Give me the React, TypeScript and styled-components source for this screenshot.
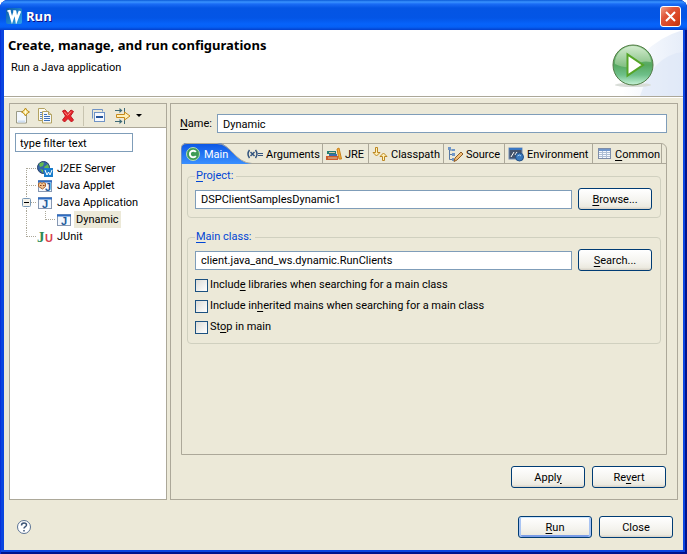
import React, { useState } from "react";
import styled, { createGlobalStyle, css } from "styled-components";

const face = "#ece9d8";
const line = "#aca899";
const fieldBorder = "#7f9db9";
const navy = "#003c74";

const GlobalStyle = createGlobalStyle`
  * { box-sizing: border-box; }
  body {
    margin: 0;
    background: #fff;
    color: #000;
    font-family: Roboto, "Noto Sans", sans-serif;
    font-size: 11px;
    line-height: 16px;
  }
  button, input { font: inherit; color: inherit; }
  u { text-underline-offset: 2px; text-decoration-thickness: 1px; }
`;

const Window = styled.div`
  display: flex;
  flex-direction: column;
  min-height: 100vh;
  padding: 0 4px 4px;
  border-radius: 8px 8px 0 0;
  overflow: hidden;
  background: #0a45e0;
  box-shadow: inset 1px 0 #0831d9, inset -2px 0 #00138c, inset 0 -2px #00138c;
`;

const TitleBar = styled.header`
  display: flex;
  align-items: center;
  gap: 4px;
  height: 30px;
  margin: 0 -4px;
  padding: 2px 6px 0;
  background: linear-gradient(#0a5ad8 0, #3a93ff 2px, #1a6cf5 4px, #0455e4 8px, #0355e6 18px, #0663fb 24px, #0560f6 27px, #0340cc 30px);
`;

const TitleText = styled.h1`
  flex: 1;
  margin: 0;
  color: #fff;
  font-family: "Open Sans", "Noto Sans", sans-serif;
  font-size: 13px;
  font-weight: 700;
  line-height: 18px;
  text-shadow: 1px 1px #0f1089;
`;

const CloseBox = styled.button`
  display: flex;
  width: 21px;
  height: 21px;
  padding: 0;
  align-items: center;
  justify-content: center;
  border: 1px solid #fff;
  border-radius: 3px;
  background: linear-gradient(135deg, #f0a088, #e0563a 35%, #d8401c 75%, #b83410);
`;

const Banner = styled.section`
  position: relative;
  display: flex;
  justify-content: space-between;
  height: 68px;
  padding: 7px 28px 0 4px;
  border-bottom: 1px solid #fff;
  background: #fff;
  box-shadow: inset 0 -1px ${line};
`;

const BannerArt = styled.svg`
  position: absolute;
  right: 0;
  top: 0;
`;

const BannerText = styled.div`
  h2 { margin: 0; font-family: "Noto Sans", sans-serif; font-size: 13px; line-height: 17px; font-weight: 700; }
  p { margin: 6px 0 0 3px; }
`;

const RunArt = styled.svg`
  position: relative;
  margin-top: 5px;
`;

const Body = styled.main`
  display: grid;
  flex: 1;
  grid-template-columns: 158px minmax(0, 1fr);
  grid-template-rows: 1fr auto;
  column-gap: 3px;
  padding: 5px 5px 0;
  background: ${face};
`;

const Sidebar = styled.aside`
  display: flex;
  flex-direction: column;
  border: 1px solid ${line};
  background: #fff;
`;

const Toolbar = styled.div`
  display: flex;
  align-items: center;
  gap: 7px;
  height: 24px;
  padding: 0 4px;
  border-bottom: 1px solid ${line};
  background: ${face};
`;

const ToolButton = styled.button`
  display: flex;
  height: 16px;
  padding: 0;
  align-items: center;
  gap: 5px;
  border: 0;
  background: none;
`;

const ToolDivider = styled.span`
  width: 1px;
  height: 20px;
  background: #c8c4b0;
`;

const TextField = styled.input`
  min-width: 0;
  height: 19px;
  padding: 1px 5px 0;
  border: 1px solid ${fieldBorder};
  background: #fff;
  outline: 0;
`;

const FilterField = styled(TextField)`
  width: 118px;
  margin: 5px 5px 8px;
  padding: 1px 4px 0;
`;

const Tree = styled.ul`
  margin: 0;
  padding: 0 0 0 10px;
  list-style: none;
`;

const TreeRow = styled.li`
  display: flex;
  align-items: center;
  height: 17px;
`;

const TreeLabel = styled.button<{ $selected?: boolean }>`
  height: 17px;
  margin-left: 2px;
  padding: 1px 2px 0;
  border: 0;
  white-space: nowrap;
  background: ${(p) => (p.$selected ? face : "none")};
`;

const Editor = styled.section`
  display: flex;
  flex-direction: column;
  padding: 10px 10px 11px 9px;
  border: 1px solid ${line};
`;

const NameRow = styled.label`
  display: flex;
  align-items: center;
  gap: 5px;
  margin-bottom: 10px;
  ${TextField} { flex: 1; }
`;

const TabFolder = styled.div`
  display: flex;
  flex: 1;
  flex-direction: column;
  margin-left: 1px;
  border: 1px solid ${line};
  border-radius: 5px 6px 0 0;
`;

const TabStrip = styled.div`
  display: grid;
  grid-template-columns: 61px 80px 46px 75px 61px 88px 69px 1fr;
  height: 20px;
  border-bottom: 1px solid ${line};
`;

const Tab = styled.button<{ $active?: boolean; $divided?: boolean }>`
  position: relative;
  display: flex;
  align-items: center;
  gap: 3px;
  padding: 2px 0 0 3px;
  border: 0;
  border-right: ${(p) => (p.$divided ? `1px solid ${line}` : "0")};
  background: none;
  white-space: nowrap;
  svg { flex: none; }
  ${(p) => p.$active && css`color: #fff;`}
  > * { z-index: 1; }
`;

const TabShape = styled.svg`
  && {
    position: absolute;
    left: -1px;
    top: -1px;
    z-index: 0;
  }
`;

const TabPage = styled.div`
  display: flex;
  flex-direction: column;
  gap: 11px;
  padding: 4px 5px;
`;

const Group = styled.fieldset`
  min-width: 0;
  margin: 0;
  padding: 4px 8px 7px 7px;
  border: 1px solid #d0d0bf;
  border-radius: 4px;
  legend { padding: 0 3px 0 1px; color: #0046d5; }
`;

const FieldRow = styled.div`
  display: flex;
  align-items: center;
  gap: 6px;
  ${TextField} { flex: 1; }
`;

const PushButton = styled.button<{ $primary?: boolean }>`
  width: 74px;
  height: 22px;
  padding: 1px 0 0;
  border: 1px solid ${navy};
  border-radius: 3px;
  background: linear-gradient(#fff, #f4f3ee 60%, #eceae0 88%, #d6d0c5);
  ${(p) => p.$primary && css`box-shadow: inset 0 1px #cee7ff, inset 2px 0 #a9c4f3, inset -2px 0 #a9c4f3, inset 0 -2px #7a9ce6;`}
`;

const Checks = styled.div`
  display: flex;
  flex-direction: column;
  gap: 5px;
  padding: 6px 0 1px;
`;

const CheckRow = styled.label`
  display: flex;
  align-items: center;
  gap: 2px;
  input {
    appearance: none;
    width: 13px;
    height: 13px;
    margin: 0;
    border: 1px solid #1c5180;
    background: linear-gradient(135deg, #dcdcd7, #fff);
  }
  input:checked { background: #21a121; }
`;

const ButtonRow = styled.div`
  display: flex;
  justify-content: flex-end;
  gap: 7px;
  padding-right: 1px;
  margin-top: 11px;
`;

const Footer = styled.footer`
  display: flex;
  grid-column: 1 / -1;
  align-items: center;
  justify-content: space-between;
  padding: 16px 5px 12px 7px;
  ${ButtonRow} { margin: 0; padding: 0; }
`;

const HelpButton = styled.button`
  display: flex;
  padding: 0;
  border: 0;
  background: none;
`;

const IconLetter = styled.text`
  font-family: "Liberation Sans", sans-serif;
  font-size: 11px;
  font-weight: 700;
`;

const SerifLetter = styled.text`
  font-family: "Liberation Serif", serif;
  font-size: 15px;
  font-weight: 700;
`;

const Icon = ({ children, w = 16 }: { children: React.ReactNode; w?: number }) => (
  <svg width={w} height="16" viewBox={`0 0 ${w} 16`} aria-hidden="true">{children}</svg>
);

const ProductIcon = () => (
  <Icon>
    <defs><linearGradient id="prod" x2="1" y2="1"><stop stopColor="#0a5aa8" /><stop offset="1" stopColor="#2fa4ea" /></linearGradient></defs>
    <rect width="16" height="16" rx="2" fill="url(#prod)" />
    <path d="M3 2l3 10L9 3l1.500 9L14 3" fill="none" stroke="#fff" strokeWidth="2.500" />
    <path d="M1 3h4M7 3h3" stroke="#fff" />
  </Icon>
);

const NewIcon = () => (
  <Icon>
    <path d="M2.500 3.500h8l2 3v8.500h-10z" fill="#f4f8fd" stroke="#9a9a86" />
    <path d="M4 13.500h7" stroke="#cfdff2" strokeWidth="2" />
    <path d="M11.500 0l1.500 2.500 2.500 1.500-2.500 1.500L11.500 8 10 5.500 7.500 4 10 2.500z" fill="#ffe680" stroke="#b78a1e" />
    <path d="M11.500 2v4M9.500 4h4" stroke="#fffbe0" />
  </Icon>
);

const CopyIcon = () => (
  <Icon>
    <path d="M1.500 .500h6l2 2v10h-8z" fill="#fdfaf0" stroke="#b3a362" />
    <path d="M3 4.500h2M3 6.500h2M3 8.500h2M3 10.500h2" stroke="#5b86c4" />
    <path d="M5.500 3.500h6l3 3v8.500h-9z" fill="#f5f9ff" stroke="#b3a362" />
    <path d="M11.500 3.500v3h3" fill="#e3d9a8" stroke="#b3a362" />
    <path d="M7 6.500h3M7 8.500h6M7 10.500h6M7 12.500h6" stroke="#3e70b8" />
  </Icon>
);

const DeleteIcon = () => (
  <Icon>
    <path d="M2.500 3l2.500-1L8 5.500 11 2l2.500 1.500L10.500 8l3 4-2 2L8 10.500 4.500 14l-2-2L5.500 8z" fill="#e6252b" stroke="#c01822" />
    <path d="M4.500 4l3 3.500M11 3.500l-3 3.500" stroke="#ff8d80" />
  </Icon>
);

const CollapseIcon = () => (
  <Icon>
    <path d="M1.500 10.500v-9h10v2" fill="none" stroke="#6f93c6" />
    <rect x="3.500" y="4.500" width="10" height="9" fill="#f6f9fe" stroke="#6f93c6" />
    <path d="M5 9h7" stroke="#26559c" strokeWidth="2" />
  </Icon>
);

const FilterIcon = () => (
  <Icon w={17}>
    <path d="M1 2.500h7M1 13.500h7" stroke="#3d6a78" />
    <path d="M5.500 0l3 2.500-3 2.500zM5.500 11l3 2.500-3 2.500z" fill="#3d6a78" />
    <path d="M10.500 0v5M10.500 11v5" stroke="#3d6a78" />
    <path d="M2.500 6.500h8v-2.500l5.500 4-5.500 4V9.500h-8z" fill="#fff0b8" stroke="#c68a1c" />
  </Icon>
);

const JavaWindow = ({ applet = false }: { applet?: boolean }) => (
  <Icon>
    <rect x="1.500" y="2.500" width="13" height="11" fill="#f3f8ff" stroke="#8798b2" />
    <path d="M1 3.500h14" stroke="#2d6cc4" strokeWidth="2" />
    <IconLetter x={applet ? 8 : 5} y="13" fill="#1f5c9c">J</IconLetter>
    {applet && <path d="M1.500 5.500l2-1 1.500 1 1.500-1 2 1v3l-3 2.500-4-2.500z" fill="#f1c18e" stroke="#a8642f" />}
    {applet && <path d="M3 7.500h1.500M6 7.500h1.500" stroke="#803a20" />}
  </Icon>
);

const ServerIcon = () => (
  <Icon>
    <circle cx="6.500" cy="6.500" r="6" fill="#3567a8" stroke="#263f68" />
    <path d="M2 3q3-3 5-1l-1 3-3 1zM7 6l4-3 1 4-3 2zM3 8l3 1v3z" fill="#65ba51" />
    <rect x="7" y="7" width="9" height="9" fill="#197dcc" />
    <path d="M8 9l2 5 1.500-3 1.500 3 2-5" fill="none" stroke="#fff" />
  </Icon>
);

const JUnitIcon = () => (
  <Icon>
    <SerifLetter x="0" y="13" fill="#2d8a55">J</SerifLetter>
    <IconLetter x="8" y="13" fill="#d8404c">U</IconLetter>
  </Icon>
);

const ClassIcon = () => (
  <Icon>
    <circle cx="8" cy="7" r="6.500" fill="#3f9b57" stroke="#b5dcb9" />
    <path d="M10.800 5a3.300 3.300 0 1 0 0 4" fill="none" stroke="#fff" strokeWidth="2" />
  </Icon>
);

const ArgsIcon = () => (
  <Icon w={17}>
    <path d="M3.500 3q-3 4 0 8M9.500 3q3 4 0 8" fill="none" stroke="#33547e" strokeWidth="1.500" />
    <path d="M4.500 5l4 4M8.500 5l-4 4" stroke="#33547e" strokeWidth="1.500" />
    <path d="M12 6.500h5M12 8.500h5" stroke="#33547e" />
  </Icon>
);

const JreIcon = () => (
  <Icon>
    <path d="M1 4h9v3H1z" fill="#257d72" />
    <path d="M3 7h8v2H3z" fill="#386dad" />
    <path d="M0 9h12v4H0z" fill="#cb5a2b" />
    <path d="M3 5.500h6M2 11h9" stroke="#d8c6a4" />
    <path d="M11 2l2-1 2.500 11h-2.500z" fill="#f5b03a" stroke="#c9801a" />
  </Icon>
);

const ClasspathIcon = () => (
  <Icon>
    <path d="M3.500 .500h2v5h2.500L4.500 9 1 5.500h2.500z" fill="#fff0b5" stroke="#bc8721" />
    <path d="M10.500 13.500h2v-4H15L11.500 6 8 9.500h2.500z" fill="#fff0b5" stroke="#bc8721" />
  </Icon>
);

const SourceIcon = () => (
  <Icon>
    <path d="M2.500 3v9.500H6M2.500 7.500H6M2.500 3h3" fill="none" stroke="#5778a4" />
    <path d="M1 0h3v3H1zM5 2h3v2H5zM5 6h3v3H5zM5 11h2v3H5z" fill="#6f96c7" />
    <path d="M7 14.500l1-3.500 6-6 2 2-6 6z" fill="#f0bd75" stroke="#8e5a24" />
  </Icon>
);

const EnvironmentIcon = () => (
  <Icon>
    <rect x="1" y="1" width="13" height="11" fill="#44536b" stroke="#718db6" />
    <path d="M1 2h13" stroke="#3977c4" strokeWidth="2" />
    <path d="M3 10l3-5M7 8l2-3" stroke="#fff" />
    <circle cx="11.500" cy="10" r="4" fill="#3978bd" stroke="#255184" />
    <path d="M9.500 9q2-2 3.500 0" fill="none" stroke="#a5d0f3" />
  </Icon>
);

const CommonIcon = () => (
  <Icon>
    <rect x="2.500" y="1.500" width="12" height="10" fill="#f8fbff" stroke="#7e8da8" />
    <path d="M3 3h11" stroke="#7197cc" strokeWidth="2" />
    <path d="M3 5.500h11M3 7.500h11M3 9.500h11M6.500 4v7M10.500 4v7" stroke="#afbfd4" />
  </Icon>
);

type GuideKind = "first" | "middle" | "open" | "last";

const Guide = ({ kind }: { kind: GuideKind }) => (
  <svg width="17" height="17" aria-hidden="true">
    <path
      d={kind === "last" ? "M6.500 0v9M7 8.500h10" : kind === "first" ? "M6.500 8v9M7 8.500h10" : "M6.500 0v17M7 8.500h10"}
      fill="none" stroke="#aca899" strokeDasharray="1 1"
    />
    {kind === "open" && <rect x="2.500" y="4.500" width="8" height="8" rx="1" fill="#f4f2ea" stroke="#7898b5" />}
    {kind === "open" && <path d="M4 8.500h5" stroke="#000" />}
  </svg>
);

const ChildGuide = () => (
  <svg width="36" height="17" aria-hidden="true">
    <path d="M6.500 0v17M25.500 0v9M26 8.500h10" fill="none" stroke="#aca899" strokeDasharray="1 1" />
  </svg>
);

const configurations = [
  { name: "J2EE Server", guide: <Guide kind="first" />, icon: <ServerIcon /> },
  { name: "Java Applet", guide: <Guide kind="middle" />, icon: <JavaWindow applet /> },
  { name: "Java Application", guide: <Guide kind="open" />, icon: <JavaWindow /> },
  { name: "Dynamic", guide: <ChildGuide />, icon: <JavaWindow /> },
  { name: "JUnit", guide: <Guide kind="last" />, icon: <JUnitIcon /> },
];

const tabs = [
  { label: "Arguments", icon: <ArgsIcon /> },
  { label: "JRE", icon: <JreIcon /> },
  { label: "Classpath", icon: <ClasspathIcon /> },
  { label: "Source", icon: <SourceIcon /> },
  { label: "Environment", icon: <EnvironmentIcon /> },
  { label: <span><u>C</u>ommon</span>, icon: <CommonIcon /> },
];

export default function App() {
  const [selected, setSelected] = useState("Dynamic");
  return (
    <>
      <GlobalStyle />
      <Window>
        <TitleBar>
          <ProductIcon />
          <TitleText>Run</TitleText>
          <CloseBox aria-label="Close window">
            <svg width="13" height="13" aria-hidden="true"><path d="M2 2l9 9M11 2l-9 9" stroke="#fff" strokeWidth="2" /></svg>
          </CloseBox>
        </TitleBar>
        <Banner>
          <BannerArt width="90" height="66" aria-hidden="true">
            <defs><linearGradient id="haze"><stop stopColor="#fff" /><stop offset="1" stopColor="#e6edf9" /></linearGradient></defs>
            <path d="M90 0Q42 14 29 66h61z" fill="url(#haze)" />
            <path d="M90 22Q60 25 47 66h43z" fill="#dce6f7" opacity=".6" />
          </BannerArt>
          <BannerText>
            <h2>Create, manage, and run configurations</h2>
            <p>Run a Java application</p>
          </BannerText>
          <RunArt width="44" height="46" aria-hidden="true">
            <defs>
              <linearGradient id="ball" x2="0" y2="1"><stop stopColor="#8fc98b" /><stop offset=".5" stopColor="#55a860" /><stop offset=".75" stopColor="#6fc08a" /><stop offset="1" stopColor="#c6f2d8" /></linearGradient>
              <linearGradient id="shine" x2="0" y2="1"><stop stopColor="#e4f4df" /><stop offset="1" stopColor="#8cc489" /></linearGradient>
            </defs>
            <ellipse cx="22" cy="43" rx="18" ry="2" fill="#d9ddd8" />
            <circle cx="22" cy="23" r="20" fill="url(#ball)" stroke="#527a45" />
            <path d="M4 22a18 17 0 0 1 36-2q-9-2-16 3T4 22z" fill="url(#shine)" opacity=".8" />
            <path d="M16.500 12.500v21L32 23z" fill="#fff" stroke="#55a528" strokeWidth="2" />
          </RunArt>
        </Banner>
        <Body>
          <Sidebar>
            <Toolbar>
              <ToolButton aria-label="New"><NewIcon /></ToolButton>
              <ToolButton aria-label="Duplicate"><CopyIcon /></ToolButton>
              <ToolButton aria-label="Delete"><DeleteIcon /></ToolButton>
              <ToolDivider />
              <ToolButton aria-label="Collapse all"><CollapseIcon /></ToolButton>
              <ToolButton aria-label="Filter">
                <FilterIcon />
                <svg width="6" height="4" aria-hidden="true"><path d="M0 0h6L3 3z" /></svg>
              </ToolButton>
            </Toolbar>
            <FilterField aria-label="Filter configurations" defaultValue="type filter text" />
            <Tree>
              {configurations.map((item) => (
                <TreeRow key={item.name}>
                  {item.guide}
                  {item.icon}
                  <TreeLabel $selected={item.name === selected} onClick={() => setSelected(item.name)}>{item.name}</TreeLabel>
                </TreeRow>
              ))}
            </Tree>
          </Sidebar>
          <Editor>
            <NameRow>
              <span><u>N</u>ame:</span>
              <TextField defaultValue="Dynamic" />
            </NameRow>
            <TabFolder>
              <TabStrip role="tablist">
                <Tab role="tab" aria-selected="true" $active>
                  <TabShape width="72" height="21" aria-hidden="true">
                    <defs><linearGradient id="tab" x2="0" y2="1"><stop stopColor="#0b55e4" /><stop offset="1" stopColor="#3a90ff" /></linearGradient></defs>
                    <path d="M0 21V5Q1 0 6 0H36C50 0 54 20 71 20.500V21z" fill="url(#tab)" />
                    <path d="M0 21V5Q1 .500 6 .500H36C50 .500 54 20 71 20.500" fill="none" stroke="#aca899" />
                  </TabShape>
                  <ClassIcon /><span>Main</span>
                </Tab>
                {tabs.map((tab, i) => (
                  <Tab key={i} role="tab" aria-selected="false" $divided>{tab.icon}<span>{tab.label}</span></Tab>
                ))}
              </TabStrip>
              <TabPage role="tabpanel">
                <Group>
                  <legend><u>P</u>roject:</legend>
                  <FieldRow>
                    <TextField aria-label="Project" defaultValue="DSPClientSamplesDynamic1" />
                    <PushButton><u>B</u>rowse...</PushButton>
                  </FieldRow>
                </Group>
                <Group>
                  <legend><u>M</u>ain class:</legend>
                  <FieldRow>
                    <TextField aria-label="Main class" defaultValue="client.java_and_ws.dynamic.RunClients" />
                    <PushButton><u>S</u>earch...</PushButton>
                  </FieldRow>
                  <Checks>
                    <CheckRow><input type="checkbox" /><span>Includ<u>e</u> libraries when searching for a main class</span></CheckRow>
                    <CheckRow><input type="checkbox" /><span>Include in<u>h</u>erited mains when searching for a main class</span></CheckRow>
                    <CheckRow><input type="checkbox" /><span>St<u>o</u>p in main</span></CheckRow>
                  </Checks>
                </Group>
              </TabPage>
            </TabFolder>
            <ButtonRow>
              <PushButton>Appl<u>y</u></PushButton>
              <PushButton>Re<u>v</u>ert</PushButton>
            </ButtonRow>
          </Editor>
          <Footer>
            <HelpButton aria-label="Help">
              <svg width="16" height="16" aria-hidden="true">
                <circle cx="8" cy="8" r="6.500" fill="#fff" stroke="#5a7294" />
                <path d="M5.500 6.500q0-2.500 2.500-2.500t2.500 2q0 1-1.500 2-1 .500-1 1.500M8 11v1.500" fill="none" stroke="#3d5576" strokeWidth="1.500" />
              </svg>
            </HelpButton>
            <ButtonRow>
              <PushButton $primary><u>R</u>un</PushButton>
              <PushButton>Close</PushButton>
            </ButtonRow>
          </Footer>
        </Body>
      </Window>
    </>
  );
}
